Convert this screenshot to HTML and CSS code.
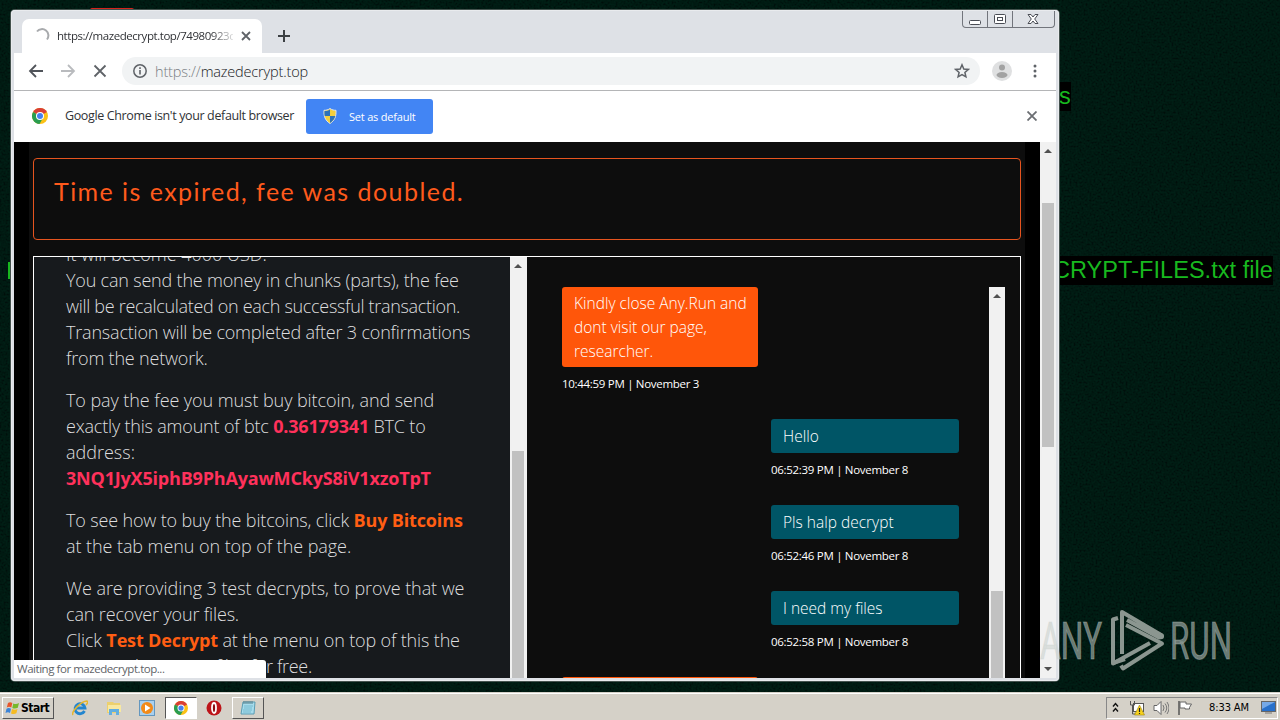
FILE: index.html
```html
<!DOCTYPE html>
<html lang="en">
<head>
<meta charset="utf-8">
<title>Desktop</title>
<link rel="stylesheet" href="styles.css">
</head>
<body>
<div class="desktop">
  <svg class="noise" width="1280" height="692"><filter id="grain"><feTurbulence type="fractalNoise" baseFrequency="0.5" numOctaves="2" seed="4"/><feColorMatrix values="0 0 0 0 0  0 .28 0 0 -.075  0 .14 0 0 -.03  0 0 0 0 1"/></filter><rect width="1280" height="692" filter="url(#grain)" opacity=".16"/></svg>
  <div class="red-icon"></div>
  <div class="wall wall-s">s</div>
  <div class="wall wall-file">CRYPT-FILES.txt file</div>
  <div class="wall-edge"></div>

  <div class="window">
    <div class="tabstrip">
      <div class="tab">
        <svg class="spinner" width="16" height="16" viewBox="0 0 16 16"><path d="M3 3.500A6 6 0 0 1 13 11.500" fill="none" stroke="#a8aaad" stroke-width="2"/></svg>
        <span class="tab-title">https://mazedecrypt.top/74980923c</span>
        <svg width="10" height="10" viewBox="0 0 10 10"><path d="M1 1l8 8M9 1l-8 8" stroke="#5f6368" stroke-width="1.800"/></svg>
      </div>
      <svg class="plus" width="14" height="14" viewBox="0 0 14 14"><path d="M7 1v12M1 7h12" stroke="#3c4043" stroke-width="2"/></svg>
      <div class="controls">
        <span class="ctl"><svg width="24" height="16"><rect x="6.500" y="9.500" width="11" height="4" rx="1" fill="#fff" stroke="#4a4d55"/></svg></span>
        <span class="ctl"><svg width="24" height="16"><rect x="6.500" y="3.500" width="11" height="9" rx="1" fill="#fff" stroke="#4a4d55"/><rect x="9.500" y="6.500" width="5" height="3" fill="#fff" stroke="#4a4d55"/></svg></span>
        <span class="ctl wide"><svg width="40" height="16"><path d="M15 3.500h3l2 2.500 2-2.500h3l-3.300 4.500 3.300 4.500h-3l-2-2.500-2 2.500h-3l3.300-4.500z" fill="#fff" stroke="#4a4d55"/></svg></span>
      </div>
    </div>
    <div class="toolbar">
      <svg class="nav" width="16" height="16" viewBox="0 0 16 16"><path d="M15 8H2M8 2L2 8l6 6" fill="none" stroke="#50545a" stroke-width="1.800"/></svg>
      <svg class="nav" width="16" height="16" viewBox="0 0 16 16"><path d="M1 8h13M8 2l6 6-6 6" fill="none" stroke="#b9bbbe" stroke-width="1.800"/></svg>
      <svg class="nav" width="16" height="16" viewBox="0 0 16 16"><path d="M2.500 2.500l11 11M13.500 2.500l-11 11" stroke="#5f6368" stroke-width="1.800"/></svg>
      <div class="omnibox">
        <svg width="16" height="16" viewBox="0 0 16 16"><circle cx="8" cy="8" r="6.200" fill="none" stroke="#5f6368" stroke-width="1.500"/><path d="M8 7v4.500M8 4.200v1.700" stroke="#5f6368" stroke-width="1.600"/></svg>
        <span class="url"><span class="scheme">https://</span>mazedecrypt.top</span>
        <svg class="star" width="16" height="16" viewBox="0 0 16 16"><path d="M8 1.800l1.800 4.200 4.500.4-3.400 3 1 4.400L8 11.500l-3.900 2.300 1-4.400-3.400-3 4.500-.4z" fill="none" stroke="#5f6368" stroke-width="1.500"/></svg>
      </div>
      <svg class="avatar" width="20" height="20" viewBox="0 0 20 20"><circle cx="10" cy="10" r="10" fill="#dfe0e1"/><circle cx="10" cy="6.500" r="3" fill="#a2a2a2"/><ellipse cx="10" cy="14" rx="5.500" ry="2.900" fill="#a2a2a2"/></svg>
      <svg class="kebab" width="4" height="14" viewBox="0 0 4 14"><circle cx="2" cy="2" r="1.500" fill="#5f6368"/><circle cx="2" cy="7" r="1.500" fill="#5f6368"/><circle cx="2" cy="12" r="1.500" fill="#5f6368"/></svg>
    </div>
    <div class="infobar">
      <svg width="16" height="16" viewBox="0 0 16 16"><circle cx="8" cy="8" r="8" fill="#fbc116"/><path d="M8 8L1.070 4A8 8 0 0 1 14.930 4z" fill="#d93f35"/><path d="M8 8L1.070 4A8 8 0 0 0 7.500 16l3.500-6z" fill="#2a9d50"/><circle cx="8" cy="8" r="4" fill="#fff"/><circle cx="8" cy="8" r="3" fill="#4580ee"/></svg>
      <span class="info-text">Google Chrome isn't your default browser</span>
      <span class="default-btn">
        <svg width="14" height="16" viewBox="0 0 14 16"><path d="M7 .5C9 2 11 2.300 13 2.300c.3 6-1 10-6 13.200C2 12.300.7 8.300 1 2.300 3 2.300 5 2 7 .5z" fill="#f4cf3c" stroke="#dfe4e9"/><path d="M7 1.500V8H1.700C1.400 6.500 1.400 5 1.500 3c2 0 4-.5 5.500-1.500zM7 8h5.300C11.600 11 10 13 7 14.900z" fill="#2d72b9"/></svg>
        <span>Set as default</span>
      </span>
      <svg class="info-close" width="10" height="10" viewBox="0 0 10 10"><path d="M.5 .5l9 9M9.500 .5l-9 9" stroke="#6b6e72" stroke-width="1.800"/></svg>
    </div>
    <div class="viewport">
      <div class="page">
        <div class="expired">Time is expired, fee was doubled.</div>
        <div class="panels">
          <div class="instructions">
            <div class="copy">
              <p>It will become 4000 USD.<br><span class="snug">You can send the money in chunks (parts), the fee</span><br><span class="tight">will be recalculated on each successful transaction.</span><br><span class="snug">Transaction will be completed after 3 confirmations</span><br><span class="snug">from the network.</span></p>
              <p><span class="loose">To pay the fee you must buy bitcoin, and send</span><br><span class="snug">exactly this amount of btc <b class="pink">0.36179341</b> BTC to</span><br>address:<br><b class="pink snug">3NQ1JyX5iphB9PhAyawMCkyS8iV1xzoTpT</b></p>
              <p><span class="medium">To see how to buy the bitcoins, click <b>Buy Bitcoins</b></span><br><span class="loose">at the tab menu on top of the page.</span></p>
              <p><span class="loose">We are providing 3 test decrypts, to prove that we</span><br><span class="medium">can recover your files.</span><br><span class="medium">Click <b>Test Decrypt</b> at the menu on top of this the</span><br><span class="tight">page and test your files for free.</span></p>
            </div>
            <div class="bar"><i class="up"></i><i class="thumb thumb-left"></i></div>
          </div>
          <div class="chat">
            <div class="messages">
              <div class="msg support"><div class="bubble">Kindly close Any.Run and<br>dont visit our page,<br>researcher.</div><div class="time">10:44:59 PM | November 3</div></div>
              <div class="msg user"><div class="bubble">Hello</div><div class="time">06:52:39 PM | November 8</div></div>
              <div class="msg user"><div class="bubble">Pls halp decrypt</div><div class="time">06:52:46 PM | November 8</div></div>
              <div class="msg user"><div class="bubble">I need my files</div><div class="time">06:52:58 PM | November 8</div></div>
              <div class="msg support"><div class="bubble next"></div></div>
            </div>
            <div class="bar"><i class="up"></i><i class="thumb thumb-chat"></i></div>
          </div>
        </div>
      </div>
      <div class="bar page-bar"><i class="up"></i><i class="thumb thumb-page"></i><i class="down"></i></div>
      <div class="status">Waiting for mazedecrypt.top...</div>
    </div>
  </div>

  <svg class="watermark" width="200" height="70" viewBox="1036 606 200 70">
    <g fill="#c9d0cc" fill-opacity=".55" stroke="#c9d0cc" stroke-opacity=".35" stroke-width="1.200" font-family="Roboto, sans-serif" font-size="52">
      <text x="1040" y="659" textLength="62" lengthAdjust="spacingAndGlyphs">ANY</text>
      <text x="1170" y="659" textLength="62" lengthAdjust="spacingAndGlyphs">RUN</text>
    </g>
    <g fill="none" stroke="#8b9690" stroke-width="4" stroke-linejoin="round">
      <path d="M1122 654v-42l40 23.500v1.500l-3 .5-32-17.500"/>
      <path d="M1118 618l-5 1.500v44l37-20.500"/>
      <path d="M1126 625l36 18.500-39 25-2-3M1113 663l12-4"/>
    </g>
  </svg>

  <div class="taskbar">
    <div class="start"><svg width="15" height="14" viewBox="0 0 15 14"><path d="M3 2Q5 .5 7.300 2L6.300 6.500Q4 5 1.800 6.500z" fill="#e8562a"/><path d="M8.300 2.400Q11 3.600 14 2L12.800 6.700Q10 8 7.300 6.900z" fill="#76b82a"/><path d="M1.500 7.700Q3.700 6.300 6 7.700L5 12Q3 10.700.5 12z" fill="#3b84d8"/><path d="M7 8Q10 9.300 12.500 8L11.400 12.300Q9 13.600 6 12.400z" fill="#f5bb22"/></svg><b>Start</b></div>
    <div class="app app-ie"><svg width="16" height="16" viewBox="0 0 16 16"><path d="M12.500 11A5 5 0 1 1 13 8H4" fill="none" stroke="#2486cf" stroke-width="2.800"/><path d="M1 15C-1 12 9 1 15 1c1.500 1 0 3-1 4" fill="none" stroke="#e6b62c" stroke-width="1.500"/></svg></div>
    <div class="app"><svg width="16" height="16" viewBox="0 0 16 16"><path d="M1 2h6l1 1h6v10H1z" fill="#ecd06d"/><path d="M2 5h13v7H2z" fill="#f8e8a0"/><path d="M3 15V9h10v6h-3v-3H6v3z" fill="#62aee0"/></svg></div>
    <div class="app"><svg width="16" height="16" viewBox="0 0 16 16"><rect x=".5" y=".5" width="15" height="15" fill="#a9d0ef" stroke="#6497bf"/><circle cx="8" cy="8" r="6" fill="#f28a19"/><path d="M6 4.500l5.500 3.500L6 11.500z" fill="#fff"/></svg></div>
    <div class="app active"><svg width="14" height="14" viewBox="0 0 16 16"><circle cx="8" cy="8" r="8" fill="#fbc116"/><path d="M8 8L1.070 4A8 8 0 0 1 14.930 4z" fill="#d93f35"/><path d="M8 8L1.070 4A8 8 0 0 0 7.500 16l3.500-6z" fill="#2a9d50"/><circle cx="8" cy="8" r="4" fill="#fff"/><circle cx="8" cy="8" r="3" fill="#4580ee"/></svg></div>
    <div class="app opera"><svg width="16" height="16" viewBox="0 0 16 16"><circle cx="8" cy="8" r="7.500" fill="#bd1419"/><ellipse cx="8" cy="8" rx="2" ry="5" fill="#8c0c10" stroke="#fff" stroke-width="1.800"/></svg></div>
    <div class="app raised"><svg width="16" height="16" viewBox="0 0 16 16"><path d="M3 2h12l-1 12H1z" fill="#a7dcec" stroke="#5a9db4"/><path d="M4 1v3M6 1v3M8 1v3M10 1v3M12 1v3" stroke="#567c88"/><path d="M4 6h9M4 8h8M3 10h9M3 12h8" stroke="#75b9ce"/></svg></div>
    <div class="tray">
      <svg width="7" height="11" viewBox="0 0 7 11"><path d="M1 4.500l2.500-3 2.500 3M1 9.500l2.500-3 2.500 3" fill="none" stroke="#111" stroke-width="1.400"/></svg>
      <svg class="net" width="16" height="16" viewBox="0 0 16 16"><rect x="4.500" y="3.500" width="10" height="8" fill="#fff" stroke="#555"/><path d="M1.500 1v4h4V1M3.500 5v9h4" fill="none" stroke="#555"/><path d="M10.500 5l5 10h-10z" fill="#f8d21c" stroke="#9c830e" stroke-width=".6"/><path d="M10.500 8v4M10.500 13v1" stroke="#222" stroke-width="1.200"/></svg>
      <svg class="vol" width="16" height="16" viewBox="0 0 16 16"><path d="M1 5.500h3L8 1.500v13L4 10.500H1z" fill="#fff" stroke="#666"/><path d="M10 5q2 3 0 6M12 3.500q3.500 4.500 0 9M14 2q4 6 0 12" fill="none" stroke="#777"/></svg>
      <svg class="flag" width="16" height="16" viewBox="0 0 16 16"><path d="M2 1v14" stroke="#555" stroke-width="1.500"/><path d="M3 2h6v2h5.500l-2 3.500 0 1.500H8V8H3z" fill="#fff" stroke="#666"/></svg>
      <span class="clock">8:33 AM</span>
      <svg class="show" width="15" height="13" viewBox="0 0 15 13"><rect x=".5" y=".5" width="14" height="10" fill="#2870ca" stroke="#666"/><path d="M1 1h13L1 8z" fill="#76a9e7"/><path d="M4 12h7" stroke="#777"/></svg>
    </div>
  </div>
</div>
</body>
</html>
```

FILE: styles.css
```css
* { box-sizing: border-box; }
body { margin: 0; font-family: "Open Sans", "Noto Sans", sans-serif; }
svg { display: block; flex: none; }
.desktop { position: relative; width: 1280px; height: 720px; overflow: hidden; background: #00120b; }
.noise { position: absolute; left: 0; top: 0; }
.red-icon { position: absolute; left: 90px; top: 8px; width: 44px; height: 4px; background: #d6231c; border-radius: 2px; }
.wall { position: absolute; background: #000; color: #18b81f; font-family: "Liberation Sans", sans-serif; font-size: 23.5px; line-height: 29px; white-space: nowrap; }
.wall-s { left: 1052px; top: 82px; width: 19px; padding-left: 7px; }
.wall-file { left: 1053px; top: 256px; width: 220px; letter-spacing: .05px; }
.wall-edge { position: absolute; left: 8px; top: 262px; width: 3px; height: 17px; background: #18b81f; }

.window { position: absolute; left: 11px; top: 10px; width: 1048px; height: 671px; padding: 0 3px 3px; background: #dee1e6; border-radius: 4px; display: flex; flex-direction: column; box-shadow: inset 0 0 0 1px #e9ebee, 0 0 0 1px #44524e; }
.tabstrip { height: 43px; display: flex; position: relative; }
.tab { margin: 9px 0 0 8px; width: 240px; height: 34px; background: #fff; border-radius: 7px 7px 0 0; display: flex; align-items: center; padding-left: 12px; }
.tab-title { margin: -2px 8px 0 7px; width: 176px; overflow: hidden; white-space: nowrap; font-size: 11.5px; letter-spacing: -.45px; color: #303236; mask-image: linear-gradient(90deg, #000 154px, transparent 180px); }
.plus { margin: 19px 0 0 15px; }
.controls { display: flex; margin: 1px 1px 0 auto; height: 17px; border: 1px solid #72757c; border-top: 0; border-radius: 0 0 4px 4px; }
.ctl { width: 25px; border-right: 1px solid #72757c; }
.wide { width: 41px; border: 0; }
.toolbar { height: 38px; background: #fff; display: flex; align-items: center; padding: 0 0 1px 14px; border-bottom: 1px solid #b4b5b7; }
.nav { margin-right: 16px; }
.omnibox { width: 858px; height: 28px; margin-left: -2px; border-radius: 14px; background: #f1f3f4; display: flex; align-items: center; padding: 0 10px; }
.url { margin-left: 7px; font-size: 14.5px; font-weight: 300; color: #202124; letter-spacing: -.17px; }
.scheme { color: #7a7e83; }
.star { margin-left: auto; }
.avatar { margin-left: 12px; }
.kebab { margin-left: 21px; }
.infobar { height: 51px; background: #fff; display: flex; align-items: center; padding: 0 0 1px 18px; }
.info-text { margin: -1px 0 0 17px; width: 241px; white-space: nowrap; font-size: 12.5px; letter-spacing: -.37px; color: #303236; }
.default-btn { width: 127px; height: 35px; margin-top: 1px; border-radius: 3px; background: #4285f4; color: #fff; font-size: 11px; letter-spacing: -.2px; display: flex; align-items: center; padding: 0 0 1px 17px; gap: 12px; white-space: nowrap; }
.info-close { margin-left: auto; margin-right: 19px; }

.viewport { flex: 1; min-height: 0; display: flex; position: relative; background: #000; overflow: hidden; }
.page { width: 996px; margin-left: 15px; margin-right: 15px; background: #0d0d0d; padding: 16px 4px 0; }
.expired { height: 82px; border: 1px solid #e5541f; border-radius: 4px; padding: 14px 20px; color: #ff5a1c; font-family: Lato, sans-serif; font-size: 25px; line-height: 36px; font-weight: 400; letter-spacing: 1.45px; white-space: nowrap; }
.panels { margin-top: 16px; height: 440px; border: 1px solid #fff; display: flex; }
.instructions { width: 493px; display: flex; background: #171a1d; overflow: hidden; }
.copy { width: 476px; margin-top: -16px; padding-left: 32px; color: #dededf; font-size: 18px; font-weight: 300; line-height: 26px; white-space: nowrap; }
.copy p { margin: 0 0 16px; }
.copy b { color: #ff5e13; font-weight: 700; }
.copy .pink { color: #ff315b; }
.loose { letter-spacing: -.07px; }
.medium { letter-spacing: -.15px; }
.snug { letter-spacing: -.19px; }
.tight { letter-spacing: -.31px; }
.bar { width: 17px; background: #f1f1f1; position: relative; flex: none; }
.up, .down { position: absolute; left: 4px; border: 4px solid transparent; }
.up { top: 3px; border-bottom: 4px solid #505050; }
.down { bottom: 3px; border-top: 4px solid #505050; }
.thumb { position: absolute; left: 2px; width: 12px; background: #c1c1c1; }
.thumb-left { top: 194px; bottom: 0; }
.thumb-chat { top: 304px; bottom: 0; }
.thumb-page { top: 61px; height: 244px; }
.page-bar { width: 16px; }
.chat { flex: 1; display: flex; padding-top: 30px; }
.messages { width: 462px; padding-left: 35px; }
.chat .bar { width: 16px; }
.msg { height: 86px; }
.support { width: 196px; height: 132px; }
.user { margin-left: 209px; width: 188px; }
.bubble { padding: 5px 12px; border-radius: 3px; background: #005566; color: #fff; font-size: 15.5px; font-weight: 300; line-height: 24px; white-space: nowrap; }
.support .bubble { background: #ff560a; padding: 4px 12px; }
.support .next { height: 34px; }
.time { color: #fff; font-size: 11.5px; letter-spacing: -.3px; line-height: 16px; margin-top: 9px; white-space: nowrap; }
.status { position: absolute; left: 0; bottom: 0; width: 252px; height: 18px; padding-left: 3px; background: #fff; border-radius: 0 3px 0 0; color: #606367; font-size: 11.5px; letter-spacing: -.46px; line-height: 18px; }

.watermark { position: absolute; left: 1036px; top: 606px; }
.taskbar { position: absolute; left: 0; top: 692px; width: 1280px; height: 28px; background: #d5d1c8; border-top: 1px solid #d5d1c8; box-shadow: inset 0 1px #fff; display: flex; align-items: center; padding-top: 2px; }
.start { margin-left: 2px; width: 52px; height: 22px; display: flex; align-items: center; padding-left: 2px; border: 1px solid; border-color: #fff #555 #555 #fff; font: 12px "DejaVu Sans Condensed", "DejaVu Sans", sans-serif; font-stretch: condensed; letter-spacing: -.5px; gap: 1px; }
.app { width: 32px; height: 22px; display: flex; align-items: center; justify-content: center; }
.app-ie { margin-left: 10px; }
.app + .app { margin-left: 1.500px; }
.active { background: #fff; border: 1px solid; border-color: #555 #fff #fff #555; }
.raised { border: 1px solid; border-color: #fff #555 #555 #fff; }
.tray { margin-left: auto; margin-right: 2px; width: 172px; height: 22px; border: 1px solid; border-color: #888 #fff #fff #888; display: flex; align-items: center; padding-left: 5px; }
.net { margin-left: 10px; }
.vol { margin-left: 8px; }
.flag { margin-left: 8px; }
.clock { margin-left: 16px; width: 50px; font: 11px "DejaVu Sans Condensed", "DejaVu Sans", sans-serif; font-stretch: condensed; white-space: nowrap; letter-spacing: -.1px; }
.show { margin-left: 2px; }
```
